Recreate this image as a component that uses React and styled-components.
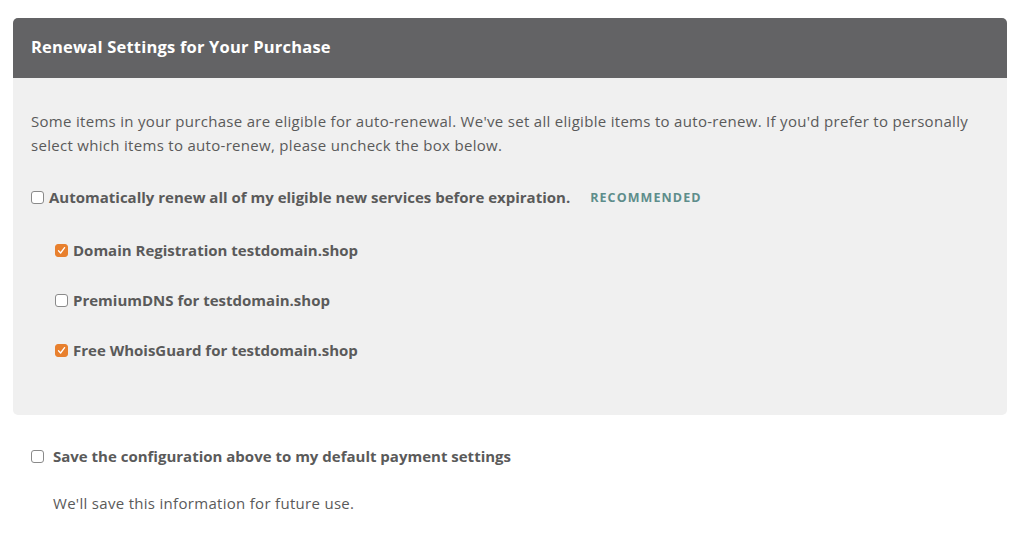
import React, { useState } from 'react'
import styled, { createGlobalStyle } from 'styled-components'

const GlobalStyle = createGlobalStyle`
    html, body {
        margin: 0;
        padding: 0;
        background: #ffffff;
        font-family: "Open Sans", "Liberation Sans", sans-serif;
        color: #5a5a5a;
    }
`

const Page = styled.div`
    padding: 18px 15px 0 13px;
`

const Panel = styled.section`
    border-radius: 5px;
    overflow: hidden;
    background: #f0f0f0;
`

const PanelHeader = styled.h2`
    margin: 0;
    height: 60px;
    box-sizing: border-box;
    padding: 0 18px 3px 18px;
    display: flex;
    align-items: center;
    background: #636365;
    color: #ffffff;
    font-size: 16.5px;
    font-weight: 700;
    letter-spacing: 0.2px;
`

const PanelBody = styled.div`
    padding: 31px 18px 52px 18px;
`

const Intro = styled.p`
    margin: 0 0 27px 0;
    font-size: 15px;
    letter-spacing: 0.3px;
    line-height: 24px;
`

const Row = styled.label`
    display: flex;
    align-items: center;
    gap: ${(p) => p.gap || 5}px;
    margin-left: ${(p) => p.indent || 0}px;
    height: ${(p) => p.height || 26}px;
    font-size: 15px;
    font-weight: 700;
    cursor: pointer;
`

const Box = styled.span`
    width: 13px;
    height: 13px;
    box-sizing: border-box;
    border-radius: 3px;
    flex-shrink: 0;
    display: flex;
    align-items: center;
    justify-content: center;
    background: ${(p) => (p.checked ? '#e8802e' : '#ffffff')};
    border: 1px solid ${(p) => (p.checked ? '#e8802e' : '#8a8a8a')};
`

const Badge = styled.span`
    margin-left: 15px;
    color: #5e8d8b;
    font-size: 12.5px;
    font-weight: 700;
    letter-spacing: 1.1px;
`

const SubList = styled.div`
    display: flex;
    flex-direction: column;
    gap: 24px;
    margin-top: 27px;
`

const Footer = styled.div`
    padding: 28px 18px;
`

const Note = styled.p`
    margin: 24px 0 0 22px;
    font-size: 15px;
    letter-spacing: 0.3px;
`

const Checkbox = ({ checked }) => (
    <Box checked={checked}>
        {checked && (
            <svg width="9" height="9" viewBox="0 0 9 9">
                <path d="M1.5 4.8 L3.6 7 L7.6 1.6" fill="none" stroke="#fff" strokeWidth="1.3" strokeLinecap="round" strokeLinejoin="round" />
            </svg>
        )}
    </Box>
)

const App = () => {
    const [items, setItems] = useState([
        { name: 'Domain Registration testdomain.shop', on: true },
        { name: 'PremiumDNS for testdomain.shop', on: false },
        { name: 'Free WhoisGuard for testdomain.shop', on: true },
    ])
    const [all, setAll] = useState(false)
    const [save, setSave] = useState(false)

    const toggle = (i) =>
        setItems(items.map((it, n) => (n === i ? { ...it, on: !it.on } : it)))

    return (
        <Page>
            <GlobalStyle />
            <Panel>
                <PanelHeader>Renewal Settings for Your Purchase</PanelHeader>
                <PanelBody>
                    <Intro>
                        Some items in your purchase are eligible for auto-renewal. We've set all eligible items to auto-renew. If you'd prefer to personally select which items to auto-renew, please uncheck the box below.
                    </Intro>
                    <Row onClick={() => setAll(!all)}>
                        <Checkbox checked={all} />
                        Automatically renew all of my eligible new services before expiration.
                        <Badge>RECOMMENDED</Badge>
                    </Row>
                    <SubList>
                        {items.map((it, i) => (
                            <Row key={it.name} indent={24} onClick={() => toggle(i)}>
                                <Checkbox checked={it.on} />
                                {it.name}
                            </Row>
                        ))}
                    </SubList>
                </PanelBody>
            </Panel>
            <Footer>
                <Row gap={9} onClick={() => setSave(!save)}>
                    <Checkbox checked={save} />
                    Save the configuration above to my default payment settings
                </Row>
                <Note>We'll save this information for future use.</Note>
            </Footer>
        </Page>
    )
}

export default App
